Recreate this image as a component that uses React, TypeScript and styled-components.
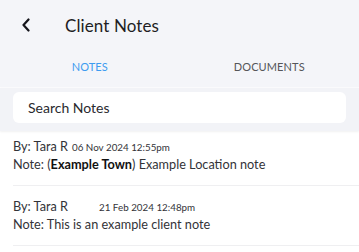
import React from "react";
import styled, { createGlobalStyle } from "styled-components";

const Global = createGlobalStyle`
  html, body { margin: 0; padding: 0; background: #ffffff; }
  body { font-family: "Lato", "Inter", sans-serif; color: #222; }
  * { box-sizing: border-box; }
`;

const Page = styled.div`
  width: 359px;
  height: 252px;
  display: flex;
  flex-direction: column;
  background: #ffffff;
  overflow: hidden;
`;

const Header = styled.div`
  background: #f4f5f9;
  border-bottom: 1px solid #fbfbfd;
`;

const TopBar = styled.div`
  height: 50px;
  display: flex;
  align-items: center;
  padding-left: 18px;
`;

const BackButton = styled.button`
  width: 16px;
  height: 16px;
  padding: 0;
  border: 0;
  background: transparent;
  display: flex;
  align-items: center;
  justify-content: center;
`;

const Title = styled.h1`
  margin: 0 0 0 31px;
  font-size: 17px;
  font-weight: 400;
  color: #1e1e24;
  letter-spacing: 0.1px;
`;

const Tabs = styled.div`
  height: 37px;
  display: grid;
  grid-template-columns: 1fr 1fr;
`;

const Tab = styled.div<{ $active?: boolean }>`
  display: flex;
  align-items: center;
  justify-content: center;
  padding-bottom: 5px;
  font-size: 11px;
  letter-spacing: 0.1px;
  text-transform: uppercase;
  color: ${(p) => (p.$active ? "#3d9cf0" : "#555659")};
`;

const SearchArea = styled.div`
  background: #f2f3f7;
  padding: 4px 13px 8px 13px;
  box-shadow: 0 1px 2px rgba(0, 0, 0, 0.06);
  position: relative;
  z-index: 1;
`;

const SearchBox = styled.div`
  height: 31px;
  background: #ffffff;
  border-radius: 6px;
  display: flex;
  align-items: center;
  padding-left: 15px;
  font-size: 14px;
  color: #2a2a2e;
`;

const List = styled.div``;

const Item = styled.div`
  margin-left: 13px;
  padding: 12px 0 13px 0;
  border-bottom: 1px solid #efeff1;
  display: flex;
  flex-direction: column;
  gap: 1px;
  &:first-child { padding-top: 7px; }
`;

const ByLine = styled.div`
  font-size: 12.7px;
  line-height: 16px;
  color: #333338;
  white-space: nowrap;
`;

const DateText = styled.span<{ $gap: number }>`
  margin-left: ${(p) => p.$gap}px;
  font-size: 9.8px;
  color: #333338;
`;

const NoteLine = styled.div`
  font-size: 12.7px;
  line-height: 16px;
  color: #333338;
  white-space: nowrap;
`;

const Strong = styled.b`
  font-weight: 700;
  color: #111;
`;

export default function App() {
  return (
    <Page>
      <Global />
      <Header>
        <TopBar>
          <BackButton aria-label="Back">
            <svg width="10" height="14" viewBox="0 0 10 14">
              <path d="M7.5 1.5 L2.5 7 L7.5 12.5" fill="none" stroke="#15151c" strokeWidth="2.2" strokeLinecap="round" strokeLinejoin="round" />
            </svg>
          </BackButton>
          <Title>Client Notes</Title>
        </TopBar>
        <Tabs>
          <Tab $active>Notes</Tab>
          <Tab>Documents</Tab>
        </Tabs>
      </Header>
      <SearchArea>
        <SearchBox>Search Notes</SearchBox>
      </SearchArea>
      <List>
        <Item>
          <ByLine>
            By: Tara R<DateText $gap={4}>06 Nov 2024 12:55pm</DateText>
          </ByLine>
          <NoteLine>
            Note: (<Strong>Example Town</Strong>) Example Location note
          </NoteLine>
        </Item>
        <Item>
          <ByLine>
            By: Tara R<DateText $gap={31}>21 Feb 2024 12:48pm</DateText>
          </ByLine>
          <NoteLine>Note: This is an example client note</NoteLine>
        </Item>
      </List>
    </Page>
  );
}
